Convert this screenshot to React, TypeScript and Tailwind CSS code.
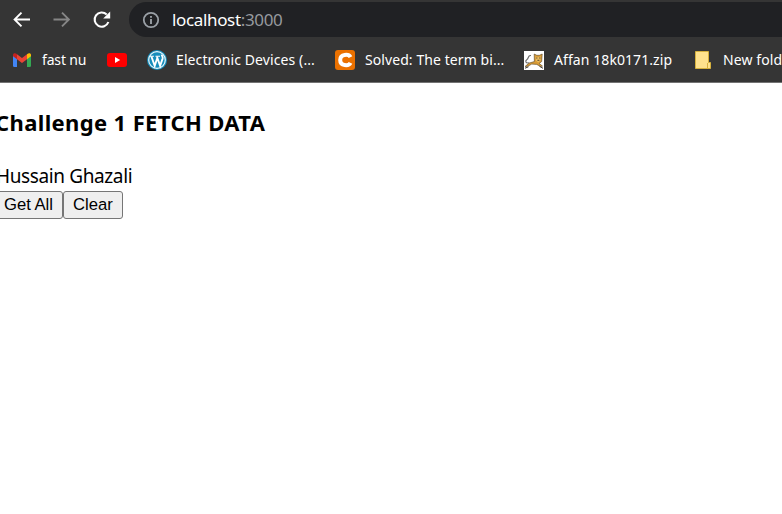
import type { ReactNode } from "react";

function BackIcon() {
  return (
    <svg width="20" height="20" viewBox="0 0 20 20" fill="none" stroke="#fff" strokeWidth="1.9">
      <path d="M18 9.5H3M9.5 2.6 2.6 9.5l6.9 6.9" />
    </svg>
  );
}

function ForwardIcon() {
  return (
    <svg width="20" height="20" viewBox="0 0 20 20" fill="none" stroke="#868686" strokeWidth="1.9">
      <path d="M1.5 9.5h15M10 2.6l6.9 6.9-6.9 6.9" />
    </svg>
  );
}

function ReloadIcon() {
  return (
    <svg width="20" height="20" viewBox="0 0 20 20" fill="none">
      <path d="M16.4 12A7.1 7.1 0 1 1 14.7 4.5" stroke="#fff" strokeWidth="2.1" />
      <path d="M18.2 1.5v7h-7z" fill="#fff" />
    </svg>
  );
}

function InfoIcon() {
  return (
    <svg width="18" height="18" viewBox="0 0 18 18" fill="none">
      <circle cx="9" cy="9" r="7.2" stroke="#9aa0a6" strokeWidth="1.8" />
      <path d="M9 8v5M9 5v1.8" stroke="#9aa0a6" strokeWidth="1.9" />
    </svg>
  );
}

function GmailIcon() {
  return (
    <svg width="18" height="14" viewBox="0 0 18 14" className="shrink-0">
      <path d="M0 3h4v11H1.2Q0 14 0 12.8z" fill="#4285f4" />
      <path d="M14 3h4v9.8q0 1.2-1.2 1.2H14z" fill="#34a853" />
      <path d="M4 1.2 9 5l5-3.8v5L9 10 4 6.2z" fill="#ea4335" />
      <path d="M0 2C0 0 2.2-.5 4 1.2v5L0 3.3z" fill="#c5221f" />
      <path d="M18 2c0-2-2.2-2.5-4-.8v5l4-2.9z" fill="#fbbc04" />
    </svg>
  );
}

function YoutubeIcon() {
  return (
    <svg width="20" height="14" viewBox="0 0 20 14" className="shrink-0">
      <rect width="20" height="14" rx="3" fill="#f00" />
      <path d="M8 4v6l5.2-3z" fill="#fff" />
    </svg>
  );
}

function WordpressIcon() {
  return (
    <svg width="20" height="20" viewBox="0 0 20 20" className="shrink-0" fill="none">
      <circle cx="10" cy="10" r="10" fill="#168dbb" />
      <circle cx="10" cy="10" r="8.3" stroke="#e8f5fa" strokeWidth="1.2" />
      <path d="M2.7 6.2h4.2M8.5 6.2h4.5" stroke="#fff" strokeWidth="1.1" />
      <path d="m4.4 6.5 3.3 9.3L10.3 8M9.9 6.5l3.2 9.3 2.5-7.2c.6-2-1-2.6-.8-4" stroke="#fff" strokeWidth="1.9" />
    </svg>
  );
}

function CheggIcon() {
  return (
    <svg width="20" height="20" viewBox="0 0 20 20" className="shrink-0" fill="none">
      <rect width="20" height="20" rx="3" fill="#eb7100" />
      <path d="M15.5 7.2C13.8 3.8 5.2 3.7 5.2 10s8.6 6.2 10.3 2.8" stroke="#fff" strokeWidth="4" />
    </svg>
  );
}

function TomcatIcon() {
  return (
    <svg width="20" height="19" viewBox="0 0 20 19" className="shrink-0" fill="none">
      <rect width="20" height="19" fill="#fff" />
      <path d="M7 4.5C3.5 4 5 7.5 3 8.5 .8 10 1.5 12.5 5.2 11.8" stroke="#686868" strokeWidth="1.1" />
      <path d="M1 15.5 5.2 12.1l5.2-1.6L10.2 3l2.6 1.3h2.6L18.2 3l-.5 7.5-2.5 2 3.3 2.6-1.8.5-4-2.2-5-.3-3.9 2.2z" fill="#d99b35" stroke="#574426" strokeWidth=".6" />
      <path d="m11.6 5.4 2.4.8 2.8-.8-.3 4.2-2.2 1.8-2.3-1.6z" fill="#e9bd62" />
      <path d="M12.2 7h1.2m1.8 0h1.2M13.4 9.3h2" stroke="#4b3820" strokeWidth=".9" />
      <path d="M1 17.2 4.5 15.8m11-.5 3.5 2" stroke="#403b35" strokeWidth="1" />
    </svg>
  );
}

function FolderIcon() {
  return (
    <svg width="16" height="18" viewBox="0 0 16 18" className="shrink-0">
      <path d="M.5.5h13v11h2v6H.5z" fill="#ffe28d" stroke="#d6b13d" />
      <path d="M12.5 12v5" stroke="#d6b13d" />
    </svg>
  );
}

function Bookmark({ icon, label, box, text }: { icon: ReactNode; label?: string; box: string; text?: string }) {
  return (
    <div className={`flex h-full shrink-0 items-center ${box}`}>
      {icon}
      {label && <span className={`whitespace-nowrap ${text}`}>{label}</span>}
    </div>
  );
}

export default function App() {
  return (
    <div className="h-[514px] w-full overflow-hidden bg-white font-['Noto_Sans',sans-serif] text-black">
      <header className="h-[83px] border-b border-[#737373] bg-[#353535]">
        <nav className="flex h-[39px] items-center pl-[12px]">
          <div className="flex w-[117px] gap-5">
            <BackIcon />
            <ForwardIcon />
            <ReloadIcon />
          </div>
          <div className="flex h-[35px] flex-1 items-center rounded-l-full bg-[#202124] pl-[13px]">
            <InfoIcon />
            <span className="ml-[12px] text-[17px] leading-6 tracking-[-0.35px] text-white">
              localhost<span className="text-[#96999e]">:3000</span>
            </span>
          </div>
        </nav>
        <div className="flex h-[42px] items-center pl-[13px] text-[14px] leading-5 text-white">
          <Bookmark icon={<GmailIcon />} label="fast nu" box="w-[94px]" text="ml-[11px] tracking-[-0.15px]" />
          <Bookmark icon={<YoutubeIcon />} box="w-[40px]" />
          <Bookmark icon={<WordpressIcon />} label="Electronic Devices (..." box="w-[188px]" text="ml-[9px] tracking-[0.1px]" />
          <Bookmark icon={<CheggIcon />} label="Solved: The term bi..." box="w-[189px]" text="ml-[10px] tracking-[0.08px]" />
          <Bookmark icon={<TomcatIcon />} label="Affan 18k0171.zip" box="w-[171px]" text="ml-[10px] tracking-[0.08px]" />
          <Bookmark icon={<FolderIcon />} label="New fold" box="w-[87px]" text="ml-[12px] tracking-[0.1px]" />
        </div>
      </header>
      <main>
        <h3 className="-ml-[5px] pt-[23px] text-[22px] leading-8 font-bold tracking-[0.37px]">Challenge 1 FETCH DATA</h3>
        <p className="-ml-[4px] mt-[24px] h-[29px] text-[19px] leading-7 tracking-[-0.38px]">Hussain Ghazali</p>
        <div className="flex font-['Liberation_Sans',Arial,sans-serif] text-[16.67px] leading-5">
          <button className="-ml-[6px] h-[28px] w-[69px] rounded-[3px] border border-[#767676] bg-[#efefef] pb-px whitespace-nowrap">Get All</button>
          <button className="h-[28px] w-[60px] rounded-[3px] border border-[#767676] bg-[#efefef] pb-px">Clear</button>
        </div>
      </main>
    </div>
  );
}
